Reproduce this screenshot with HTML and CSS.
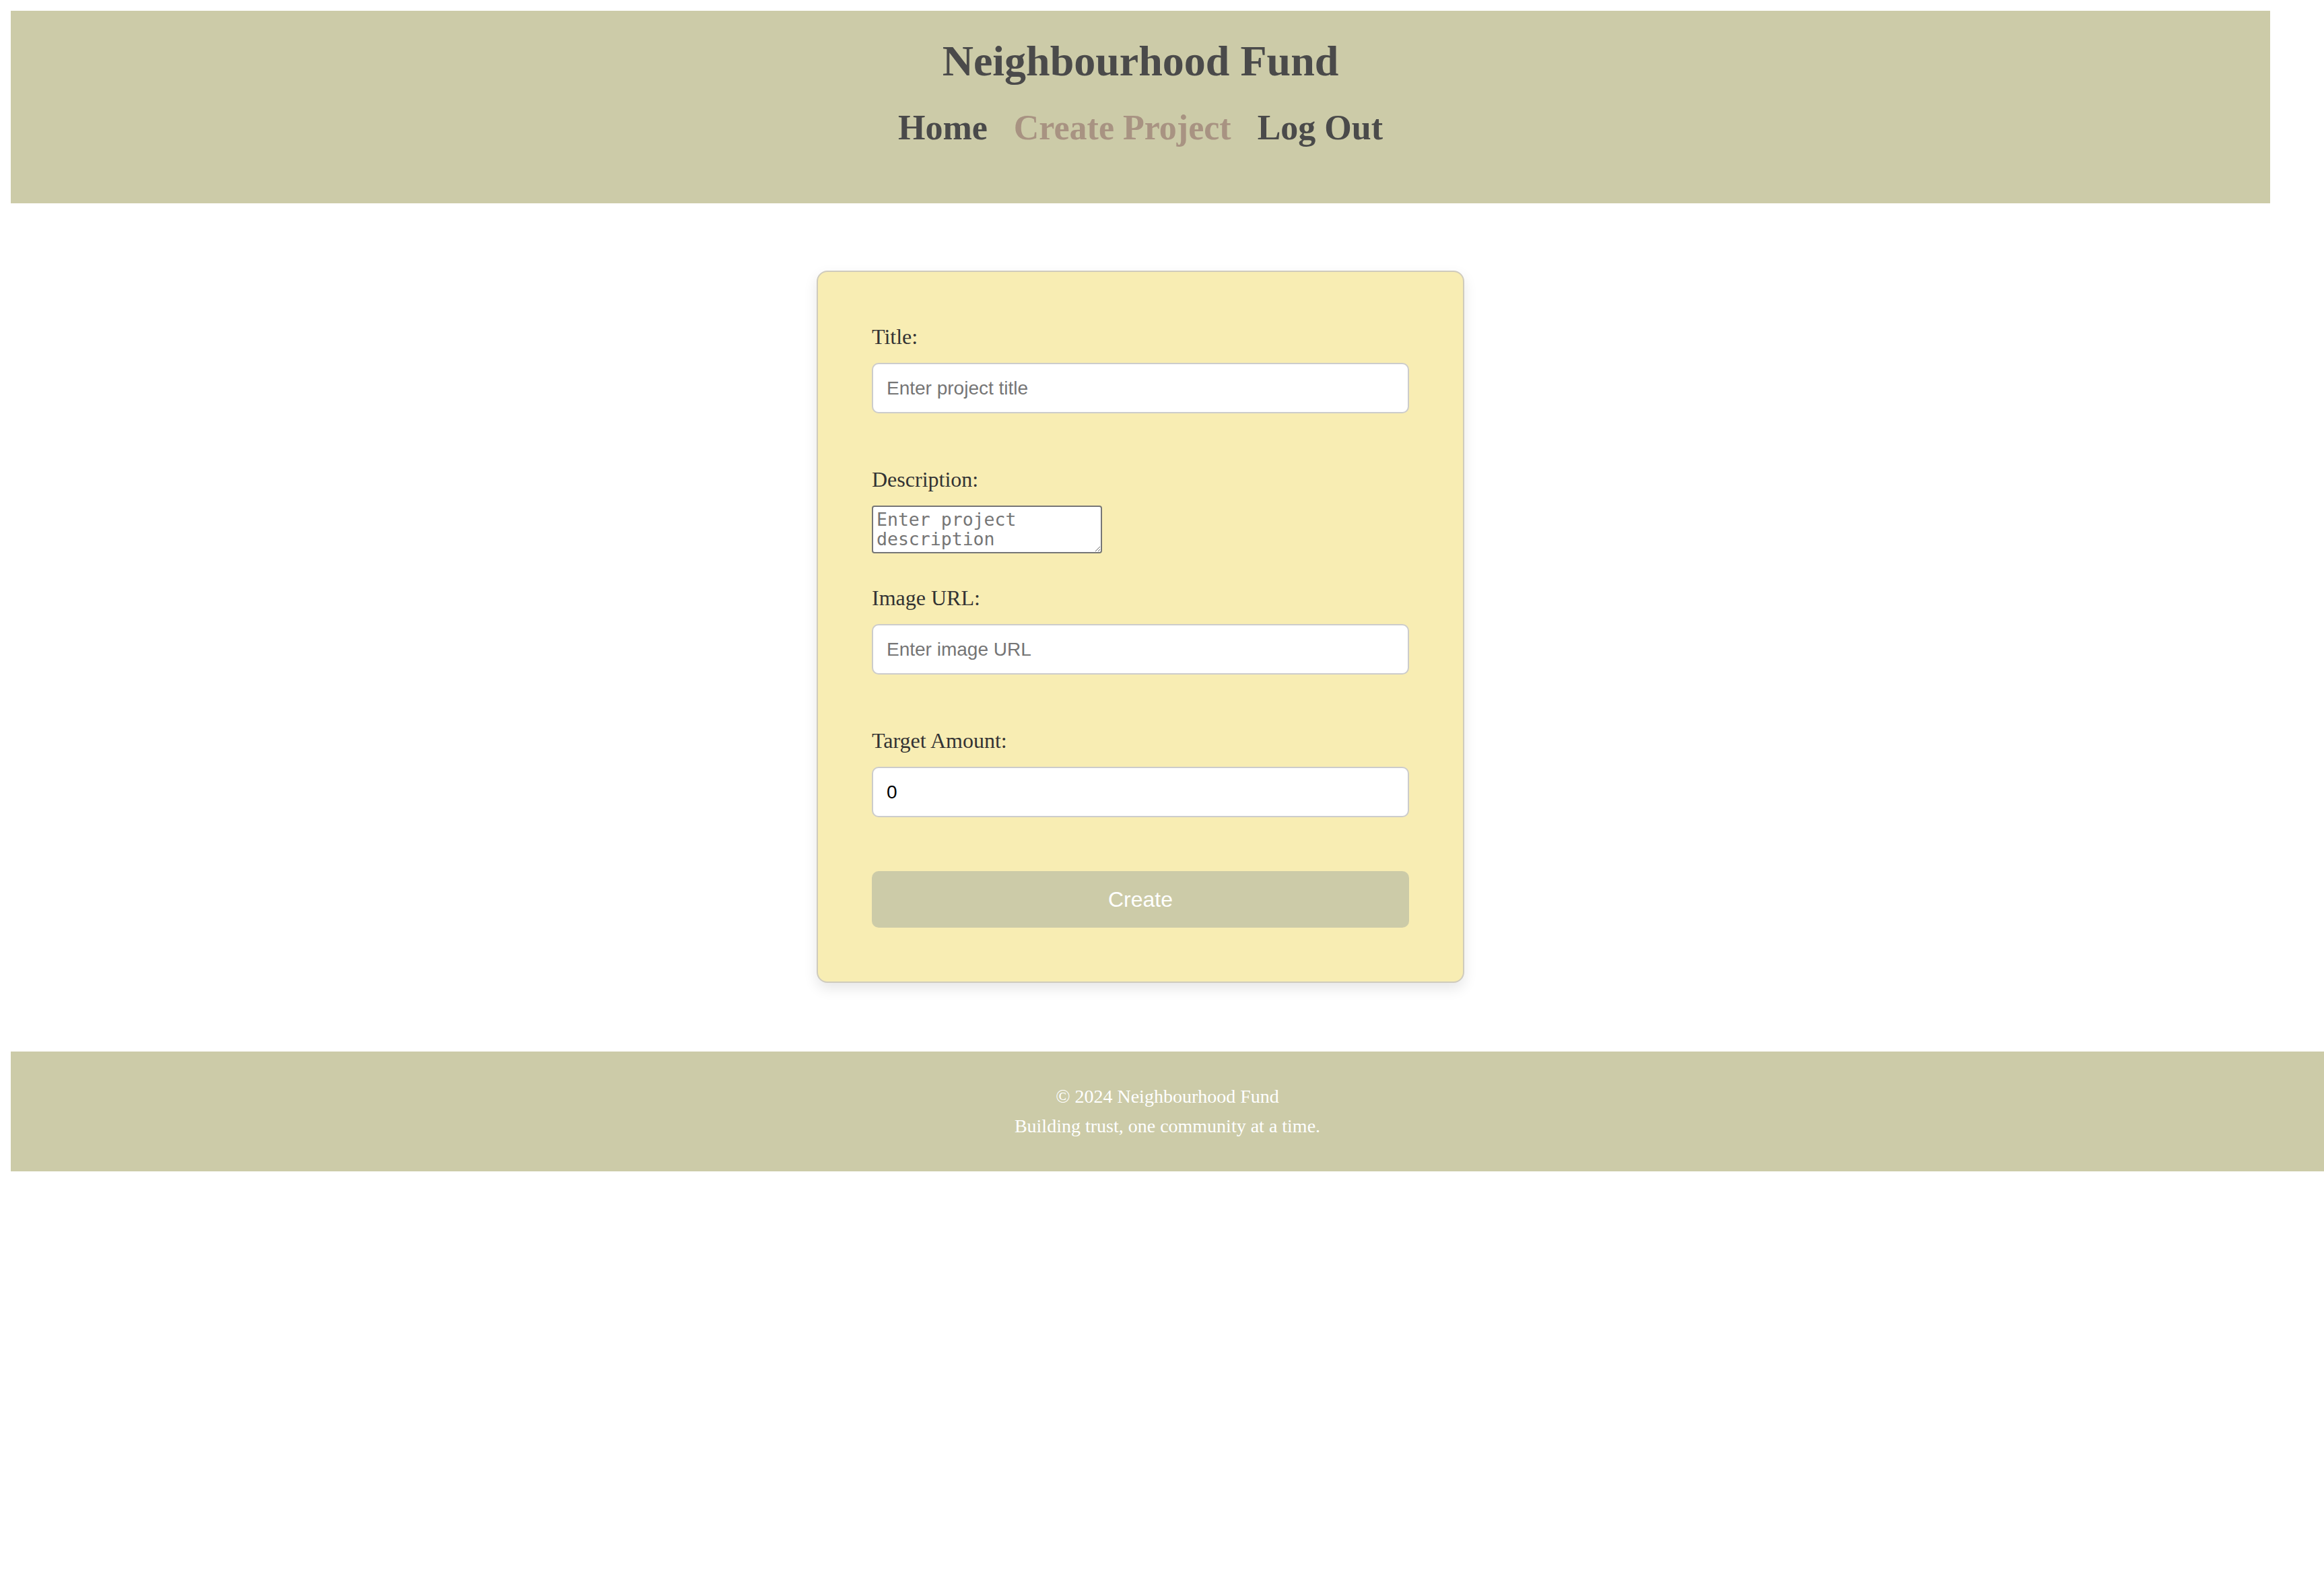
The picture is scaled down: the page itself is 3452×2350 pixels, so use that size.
FILE: index.html
```html
<!DOCTYPE html>
<html lang="en">
<head>
<meta charset="utf-8">
<title>Neighbourhood Fund</title>
<link rel="stylesheet" href="styles.css">
</head>
<body>
<header class="site-header">
  <h1 class="site-title">Neighbourhood Fund</h1>
  <nav class="site-nav">
    <a class="nav-link" href="#">Home</a>
    <a class="nav-link nav-link-active" href="#">Create Project</a>
    <a class="nav-link" href="#">Log Out</a>
  </nav>
</header>
<main class="main">
  <form class="project-form">
    <div class="form-group">
      <label class="form-label" for="title">Title:</label>
      <input class="form-input" id="title" type="text" placeholder="Enter project title">
    </div>
    <div class="form-group">
      <label class="form-label" for="description">Description:</label>
      <textarea class="form-textarea" id="description" placeholder="Enter project description"></textarea>
    </div>
    <div class="form-group">
      <label class="form-label" for="image">Image URL:</label>
      <input class="form-input" id="image" type="text" placeholder="Enter image URL">
    </div>
    <div class="form-group">
      <label class="form-label" for="target">Target Amount:</label>
      <input class="form-input" id="target" type="text" value="0">
    </div>
    <button class="form-button" type="button">Create</button>
  </form>
</main>
<footer class="site-footer">
  <p class="footer-line">© 2024 Neighbourhood Fund</p>
  <p class="footer-line">Building trust, one community at a time.</p>
</footer>
</body>
</html>
```
FILE: styles.css
```css
html {
  background: #ffffff;
}

body {
  margin: 16px 0 16px 16px;
  font-family: "Liberation Serif", "Times New Roman", serif;
  color: #333333;
}

.site-header {
  margin-right: 80px;
  background: #cccba8;
  padding: 38px 0 82px;
  text-align: center;
}

.site-title {
  margin: 0 0 32px;
  font-size: 64px;
  line-height: 74px;
  font-weight: bold;
  color: #4a4a4a;
}

.site-nav {
  display: flex;
  justify-content: center;
  gap: 39px;
  font-size: 52px;
  line-height: 60px;
  font-weight: bold;
}

.nav-link {
  color: #4a4a4a;
  text-decoration: none;
}

.nav-link-active {
  color: #a89382;
}

.main {
  margin-right: 80px;
  padding: 100px 0 102px;
}

.project-form {
  box-sizing: border-box;
  width: 962px;
  margin: 0 auto;
  padding: 78px 80px 80px;
  background: #f8edb3;
  border: 2px solid #cfcbbd;
  border-radius: 16px;
  box-shadow: 0 8px 20px rgba(0, 0, 0, 0.1);
}

.form-group {
  display: flow-root;
  margin-bottom: 40px;
}

.form-label {
  display: block;
  margin-bottom: 20px;
  font-size: 32px;
  line-height: 37px;
  color: #333333;
}

.form-input {
  display: block;
  box-sizing: border-box;
  width: 100%;
  height: 75px;
  margin: 0 0 40px;
  padding: 0 20px;
  border: 2px solid #cccccc;
  border-radius: 10px;
  background: #ffffff;
  font-family: "Liberation Sans", Arial, sans-serif;
  font-size: 28px;
  color: #000000;
  outline: none;
}

.form-input::placeholder {
  color: #757575;
}

.form-textarea {
  display: block;
  box-sizing: border-box;
  width: 342px;
  height: 71px;
  margin: 0 0 8px;
  padding: 4px 5px;
  border: 2px solid #767676;
  border-radius: 4px;
  background: #ffffff;
  font-family: "DejaVu Sans Mono", "Liberation Mono", monospace;
  font-size: 26.5px;
  line-height: 29px;
  color: #000000;
}

.form-textarea::placeholder {
  color: #757575;
}

.form-button {
  display: block;
  width: 100%;
  height: 84px;
  border: none;
  border-radius: 10px;
  background: #cccba8;
  color: #ffffff;
  font-family: "Liberation Sans", Arial, sans-serif;
  font-size: 32px;
  cursor: pointer;
}

.site-footer {
  background: #cccba8;
  padding: 45px 40px;
  text-align: center;
  color: #ffffff;
  font-size: 28px;
  line-height: 44px;
}

.footer-line {
  margin: 0;
}
```
